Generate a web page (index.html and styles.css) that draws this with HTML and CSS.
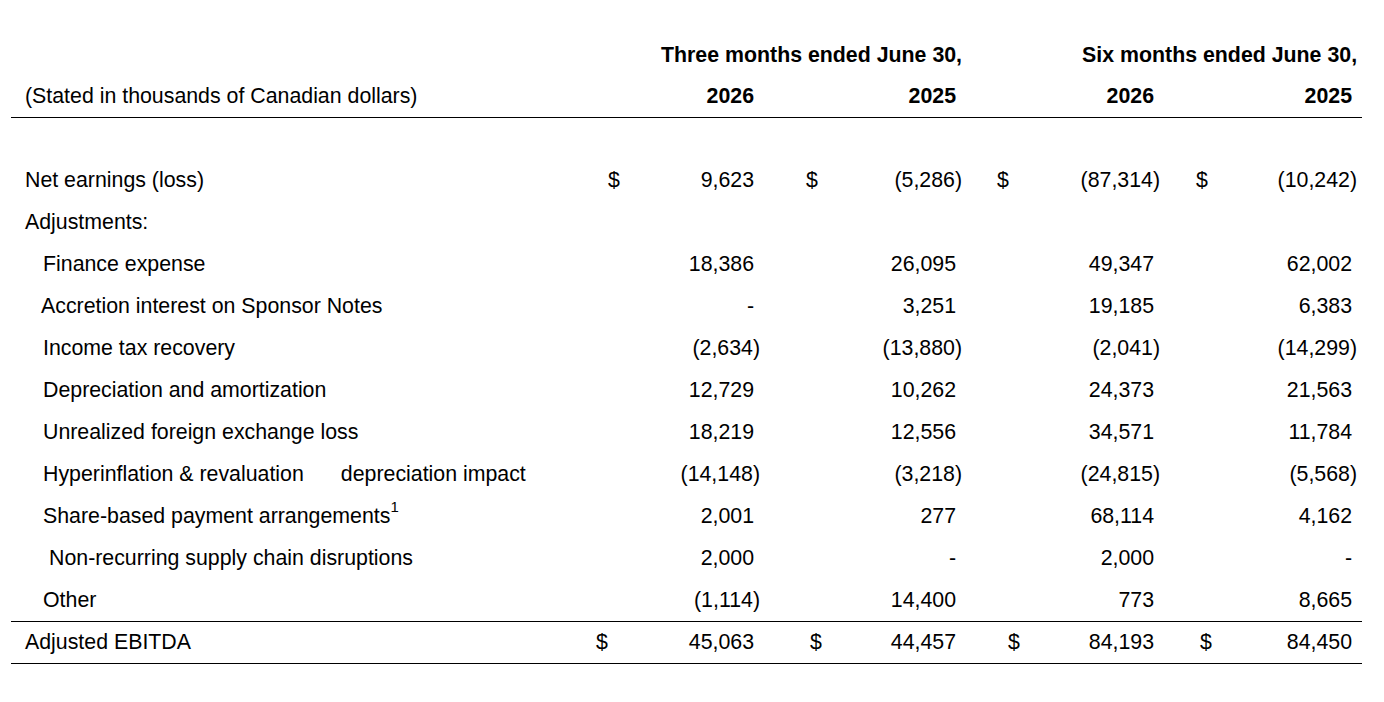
FILE: index.html
```html
<!DOCTYPE html>
<html lang="en">
<head>
<meta charset="utf-8">
<title>Adjusted EBITDA reconciliation</title>
<link rel="stylesheet" href="styles.css">
</head>
<body>
<table class="recon">
  <colgroup>
    <col class="c-label">
    <col class="c-d1"><col class="c-n1">
    <col class="c-d2"><col class="c-n2">
    <col class="c-d3"><col class="c-n3">
    <col class="c-d4"><col class="c-n4">
  </colgroup>
  <thead>
    <tr class="period">
      <th></th>
      <th colspan="4" class="grp">Three months ended June 30,</th>
      <th colspan="4" class="grp">Six months ended June 30,</th>
    </tr>
    <tr class="years">
      <th class="label">(Stated in thousands of Canadian dollars)</th>
      <th></th><th class="n">2026</th>
      <th></th><th class="n">2025</th>
      <th></th><th class="n">2026</th>
      <th></th><th class="n">2025</th>
    </tr>
  </thead>
  <tbody>
    <tr class="spacer"><td colspan="9"></td></tr>
    <tr>
      <td class="label">Net earnings (loss)</td>
      <td class="d d1">$</td><td class="n">9,623</td>
      <td class="d d2">$</td><td class="n neg">(5,286)</td>
      <td class="d d3">$</td><td class="n neg">(87,314)</td>
      <td class="d d4">$</td><td class="n neg">(10,242)</td>
    </tr>
    <tr>
      <td class="label">Adjustments:</td>
      <td></td><td></td><td></td><td></td><td></td><td></td><td></td><td></td>
    </tr>
    <tr>
      <td class="label sub">Finance expense</td>
      <td></td><td class="n">18,386</td>
      <td></td><td class="n">26,095</td>
      <td></td><td class="n">49,347</td>
      <td></td><td class="n">62,002</td>
    </tr>
    <tr>
      <td class="label sub-tight">Accretion interest on Sponsor Notes</td>
      <td></td><td class="n">-</td>
      <td></td><td class="n">3,251</td>
      <td></td><td class="n">19,185</td>
      <td></td><td class="n">6,383</td>
    </tr>
    <tr>
      <td class="label sub">Income tax recovery</td>
      <td></td><td class="n neg">(2,634)</td>
      <td></td><td class="n neg">(13,880)</td>
      <td></td><td class="n neg">(2,041)</td>
      <td></td><td class="n neg">(14,299)</td>
    </tr>
    <tr>
      <td class="label sub">Depreciation and amortization</td>
      <td></td><td class="n">12,729</td>
      <td></td><td class="n">10,262</td>
      <td></td><td class="n">24,373</td>
      <td></td><td class="n">21,563</td>
    </tr>
    <tr>
      <td class="label sub">Unrealized foreign exchange loss</td>
      <td></td><td class="n">18,219</td>
      <td></td><td class="n">12,556</td>
      <td></td><td class="n">34,571</td>
      <td></td><td class="n">11,784</td>
    </tr>
    <tr>
      <td class="label sub">Hyperinflation &amp; revaluation<span class="gap">depreciation impact</span></td>
      <td></td><td class="n neg">(14,148)</td>
      <td></td><td class="n neg">(3,218)</td>
      <td></td><td class="n neg">(24,815)</td>
      <td></td><td class="n neg">(5,568)</td>
    </tr>
    <tr>
      <td class="label sub">Share-based payment arrangements<sup class="fn">1</sup></td>
      <td></td><td class="n">2,001</td>
      <td></td><td class="n">277</td>
      <td></td><td class="n">68,114</td>
      <td></td><td class="n">4,162</td>
    </tr>
    <tr>
      <td class="label sub-wide">Non-recurring supply chain disruptions</td>
      <td></td><td class="n">2,000</td>
      <td></td><td class="n">-</td>
      <td></td><td class="n">2,000</td>
      <td></td><td class="n">-</td>
    </tr>
    <tr class="last">
      <td class="label sub">Other</td>
      <td></td><td class="n neg">(1,114)</td>
      <td></td><td class="n">14,400</td>
      <td></td><td class="n">773</td>
      <td></td><td class="n">8,665</td>
    </tr>
    <tr class="total">
      <td class="label">Adjusted EBITDA</td>
      <td class="d d1">$</td><td class="n">45,063</td>
      <td class="d d2">$</td><td class="n">44,457</td>
      <td class="d d3">$</td><td class="n">84,193</td>
      <td class="d d4">$</td><td class="n">84,450</td>
    </tr>
  </tbody>
</table>
</body>
</html>
```

FILE: styles.css
```css
html, body {
  margin: 0;
  padding: 0;
  background: #ffffff;
}

body {
  font-family: "Liberation Sans", Arial, sans-serif;
  font-size: 16pt;
  color: #000000;
}

.recon {
  margin: 35px 0 0 11px;
  width: 1351px;
  table-layout: fixed;
  border-collapse: separate;
  border-spacing: 0;
}

.c-label { width: 585px; }
.c-d1 { width: 44px; }
.c-n1 { width: 120px; }
.c-d2 { width: 80px; }
.c-n2 { width: 122px; }
.c-d3 { width: 78px; }
.c-n3 { width: 120px; }
.c-d4 { width: 80px; }
.c-n4 { width: 122px; }

.recon th,
.recon td {
  padding: 0;
  height: 42px;
  vertical-align: middle;
  white-space: nowrap;
  font-weight: normal;
  text-align: left;
}

.recon thead th {
  font-weight: bold;
}

.recon thead .label {
  font-weight: normal;
}

.recon .period th {
  height: 41px;
}

.recon .years th {
  height: 41px;
  border-bottom: 1px solid #000000;
}

.recon .grp {
  text-align: right;
}

.recon .grp:last-child {
  padding-right: 5px;
}

.recon .label {
  padding-left: 14px;
}

.recon .label.sub { padding-left: 32px; }
.recon .label.sub-tight { padding-left: 30px; }
.recon .label.sub-wide { padding-left: 38px; }

.gap {
  margin-left: 37px;
}

.fn {
  font-size: 0.7em;
  line-height: 0;
  vertical-align: 0.75em;
}

.recon .n {
  text-align: right;
  padding-right: 6px;
}

.recon .n.neg {
  padding-right: 0;
}

.recon .n:last-child {
  padding-right: 10px;
}

.recon .n.neg:last-child {
  padding-right: 5px;
}

.recon .d1 { padding-left: 12px; }
.recon .d2 { padding-left: 46px; }
.recon .d3 { padding-left: 35px; }
.recon .d4 { padding-left: 36px; }

.recon .spacer td {
  height: 41px;
}

.recon .total td {
  height: 41px;
  border-top: 1px solid #000000;
  border-bottom: 1px solid #000000;
}

.recon .total .d1 { padding-left: 0; }
.recon .total .d2 { padding-left: 50px; }
.recon .total .d3 { padding-left: 46px; }
.recon .total .d4 { padding-left: 40px; }
```
